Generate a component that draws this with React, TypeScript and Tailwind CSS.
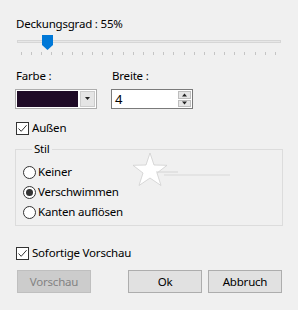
import React from 'react';

const ticks = Array.from({ length: 26 }, (_, i) => i);

function CheckBox({ label }: { label: string }) {
  return (
    <div className="flex items-center h-[16px]">
      <div className="w-[13px] h-[13px] border border-[#333333] bg-white flex items-center justify-center">
        <svg width="11" height="11" viewBox="0 0 11 11">
          <path d="M1.5 5.5 L4.2 8.3 L9.6 2.2" fill="none" stroke="#333333" strokeWidth="1" />
        </svg>
      </div>
      <span className="ml-[3px]">{label}</span>
    </div>
  );
}

function Radio({ label, checked }: { label: string; checked?: boolean }) {
  return (
    <div className="flex items-center h-[20px]">
      <div className="w-[13px] h-[13px] rounded-full border border-[#333333] bg-white flex items-center justify-center">
        {checked && <div className="w-[7px] h-[7px] rounded-full bg-[#333333]" />}
      </div>
      <span className="ml-[2px]">{label}</span>
    </div>
  );
}

function Button({ children, disabled }: { children: React.ReactNode; disabled?: boolean }) {
  return (
    <div
      className={
        disabled
          ? 'w-[74px] h-[23px] flex items-center justify-center bg-[#cccccc] border border-[#bfbfbf] text-[#838383]'
          : 'w-[74px] h-[23px] flex items-center justify-center bg-[#e1e1e1] border border-[#adadad] text-black'
      }
    >
      {children}
    </div>
  );
}

export default function App() {
  return (
    <div
      className="relative w-[298px] h-[310px] bg-[#f0f0f0] text-[11.5px] tracking-[-0.2px] leading-[16px] text-black overflow-hidden"
      style={{ fontFamily: '"Noto Sans", "Liberation Sans", sans-serif' }}
    >
      {/* Opacity */}
      <div className="pt-[16px] pl-[16px]">Deckungsgrad : 55%</div>

      {/* Slider */}
      <div className="relative mt-[3px] ml-[17px] w-[264px] h-[22px]">
        <div className="absolute left-0 right-0 top-[5px] h-[3px] bg-[#e7e7e7] border border-[#d6d6d6]" />
        <svg className="absolute left-[25px] top-0" width="11" height="15" viewBox="0 0 11 15">
          <path d="M0 0 H11 V10 L5.5 15 L0 10 Z" fill="#0078d7" />
        </svg>
        <div className="absolute left-[4px] right-[5px] top-[17px] flex justify-between">
          {ticks.map((t) => (
            <div key={t} className="w-px h-[3px] bg-[#c4c4c4]" />
          ))}
        </div>
      </div>

      {/* Colour + width */}
      <div className="flex mt-[11px] pl-[15px]">
        <div className="w-[96px]">
          <div className="pl-[1px]">Farbe :</div>
          <div className="mt-[5px] w-[82px] h-[20px] border border-[#adadad] bg-white flex p-[1px]">
            <div className="flex-1 bg-[#1f0b27]" />
            <div className="ml-[2px] w-[15px] bg-[#e5e5e5] border border-[#cccccc] flex items-center justify-center">
              <svg width="7" height="4" viewBox="0 0 7 4">
                <path d="M1 0 H6 L3.5 3 Z" fill="#222222" />
              </svg>
            </div>
          </div>
        </div>
        <div>
          <div className="pl-[1px]">Breite :</div>
          <div className="mt-[5px] w-[82px] h-[20px] border border-[#7a7a7a] bg-white flex">
            <div className="flex-1 pl-[3px] flex items-center text-[13px]">4</div>
            <div className="w-[15px] flex flex-col p-[1px] gap-[1px]">
              <div className="flex-1 bg-[#e5e5e5] border border-[#bdbdbd] flex items-center justify-center">
                <svg width="7" height="4" viewBox="0 0 7 4">
                  <path d="M1 3.5 H6 L3.5 0.5 Z" fill="#222222" />
                </svg>
              </div>
              <div className="flex-1 bg-[#e5e5e5] border border-[#bdbdbd] flex items-center justify-center">
                <svg width="7" height="4" viewBox="0 0 7 4">
                  <path d="M1 0.5 H6 L3.5 3.5 Z" fill="#222222" />
                </svg>
              </div>
            </div>
          </div>
        </div>
      </div>

      {/* Outside */}
      <div className="mt-[11px] pl-[16px]">
        <CheckBox label="Außen" />
      </div>

      {/* Style group */}
      <fieldset className="relative mt-[5px] mx-[15px] border border-[#dcdcdc] pl-[7px] pb-[3px]">
        <legend className="ml-[9px] px-[2px]">Stil</legend>
        <div className="pt-[5px]">
          <Radio label="Keiner" />
          <Radio label="Verschwimmen" checked />
          <Radio label="Kanten auflösen" />
        </div>
        <svg className="absolute left-[116px] top-[-6px]" width="110" height="42" viewBox="0 0 110 42">
          <path
            d="M18 2 L22 14 L35 14.3 L25 22 L29 34.5 L18 27 L7 34.5 L11 22 L1 14.3 L14 14 Z"
            fill="#ffffff"
            stroke="#cfcfcf"
            strokeWidth="0.8"
          />
          <line x1="24" y1="21" x2="46" y2="21" stroke="#d4d4d4" strokeWidth="1" />
          <line x1="32" y1="24" x2="98" y2="24" stroke="#d8d8d8" strokeWidth="1" />
        </svg>
      </fieldset>

      {/* Instant preview */}
      <div className="mt-[19px] pl-[16px]">
        <CheckBox label="Sofortige Vorschau" />
      </div>

      {/* Buttons */}
      <div className="flex mt-[9px] pl-[17px] pr-[16px]">
        <Button disabled>Vorschau</Button>
        <div className="ml-auto flex gap-[6px]">
          <Button>Ok</Button>
          <Button>Abbruch</Button>
        </div>
      </div>
    </div>
  );
}
